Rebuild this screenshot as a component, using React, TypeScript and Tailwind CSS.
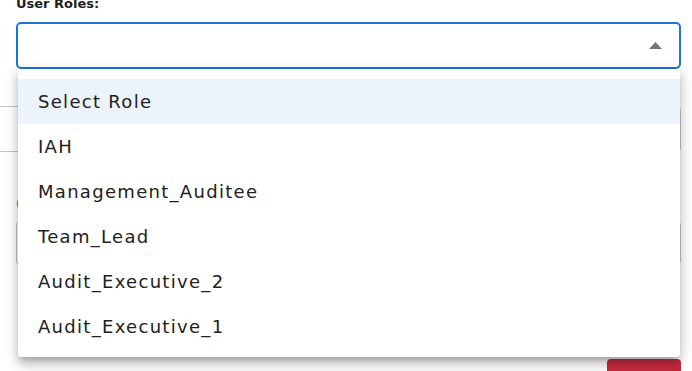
import React from 'react';

const roles = ['Select Role', 'IAH', 'Management_Auditee', 'Team_Lead', 'Audit_Executive_2', 'Audit_Executive_1'];

export default function App() {
  return (
    <div className="relative w-[692px] h-[371px] overflow-hidden bg-white font-['DejaVu_Sans',sans-serif] text-[#212121]">
      <div className="px-4">
        {/* field label, cut by the top edge */}
        <div className="-mt-[5px] text-[13px] font-bold leading-[18px] text-[#1f1f1f]">User Roles:</div>

        {/* select, open state */}
        <div className="mt-[9px] h-[47px] w-[665px] rounded-[5px] border-2 border-[#1976d2] flex items-center justify-end pr-[17px]">
          <svg width="13" height="7" viewBox="0 0 13 7" className="block">
            <path d="M0 7 L6.5 0 L13 7 Z" fill="#757575" />
          </svg>
        </div>

        {/* fields underneath the menu */}
        <div className="mt-[37px] -ml-6 h-[46px] w-[689px] rounded-[4px] border border-[#c4c4c4]" />
        <div className="mt-[47px] h-[10px] flex items-center">
          <span className="text-[12px] font-bold leading-none text-[#b5651d]">(</span>
        </div>
        <div className="mt-[12px] h-[44px] w-[665px] rounded-[4px] border border-[#c4c4c4]" />

        <div className="mt-[94px] -mr-[5px] flex justify-end">
          <button className="w-[74px] h-[36px] rounded-[4px] bg-[#c62a3e] pt-[8px] text-[14px] font-semibold leading-none text-white">
            Close
          </button>
        </div>
      </div>

      {/* dropdown menu */}
      <div className="absolute left-[18px] top-[69px] w-[662px] rounded-b-[4px] bg-white pt-[10px] pb-2 shadow-[0px_5px_5px_-3px_rgba(0,0,0,0.2),0px_8px_10px_1px_rgba(0,0,0,0.14),0px_3px_14px_2px_rgba(0,0,0,0.12)]">
        {roles.map((r, i) => (
          <div
            key={r}
            className={`h-[45px] flex items-center pl-5 text-[18px] tracking-[1.3px] ${i === 0 ? 'bg-[#ecf3fb]' : ''}`}
          >
            {r}
          </div>
        ))}
      </div>
    </div>
  );
}
